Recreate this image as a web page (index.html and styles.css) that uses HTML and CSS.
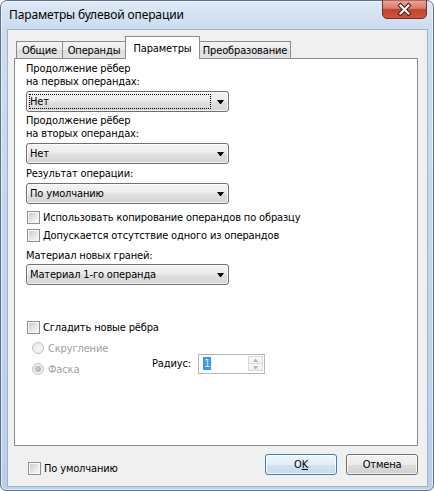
FILE: index.html
```html
<!DOCTYPE html>
<html lang="ru">
<head>
<meta charset="utf-8">
<title>Параметры булевой операции</title>
<link rel="stylesheet" href="styles.css">
</head>
<body>
<div class="window">
  <div class="titlebar">
    <span class="title">Параметры булевой операции</span>
    <div class="close">
      <svg width="45" height="19" viewBox="0 0 45 19">
        <defs>
          <linearGradient id="cg" x1="0" y1="0" x2="0" y2="1">
            <stop offset="0" stop-color="#EBA99B"/>
            <stop offset="0.45" stop-color="#D97C68"/>
            <stop offset="0.52" stop-color="#C4432C"/>
            <stop offset="1" stop-color="#D2553A"/>
          </linearGradient>
        </defs>
        <path d="M0.5 0 V14 a4.5 4.5 0 0 0 4.5 4.5 H40 a4.5 4.5 0 0 0 4.5 -4.5 V0 Z" fill="url(#cg)" stroke="#6B3328"/>
        <path d="M18.5 5.5 L26.5 13.5 M26.5 5.5 L18.5 13.5" stroke="#3E1C16" stroke-width="4.2" stroke-linecap="square"/>
        <path d="M18.5 5.5 L26.5 13.5 M26.5 5.5 L18.5 13.5" stroke="#FFFFFF" stroke-width="2.2" stroke-linecap="square"/>
      </svg>
    </div>
  </div>
  <div class="client">
    <div class="tabs">
      <div class="tab t1">Общие</div>
      <div class="tab t2">Операнды</div>
      <div class="tab active t3">Параметры</div>
      <div class="tab t4">Преобразование</div>
    </div>
    <div class="panel">
      <div class="label lab1">Продолжение рёбер<br>на первых операндах:</div>
      <div class="combo"><div class="cval focus">Нет</div><div class="carrow"><span class="tri"></span></div></div>

      <div class="label lab2">Продолжение рёбер<br>на вторых операндах:</div>
      <div class="combo"><div class="cval">Нет</div><div class="carrow"><span class="tri"></span></div></div>

      <div class="label lab3">Результат операции:</div>
      <div class="combo"><div class="cval">По умолчанию</div><div class="carrow"><span class="tri"></span></div></div>

      <div class="check-row cr1"><span class="cb"></span><span>Использовать копирование операндов по образцу</span></div>
      <div class="check-row cr2"><span class="cb"></span><span><u>Д</u>опускается отсутствие одного из операндов</span></div>

      <div class="label lab4">Материал новых граней:</div>
      <div class="combo"><div class="cval">Материал 1-го операнда</div><div class="carrow"><span class="tri"></span></div></div>

      <div class="check-row cr3"><span class="cb"></span><span>Сгладить новые рёбра</span></div>

      <div class="smooth">
        <div class="radios">
          <div class="radio-row"><span class="rb"></span><span>Скругление</span></div>
          <div class="radio-row r2"><span class="rb checked"></span><span>Фаска</span></div>
        </div>
        <div class="radius">
          <span class="rlabel">Радиус:</span>
          <div class="spin">
            <span class="spinval"><span class="sel">1</span></span>
            <span class="spinbtns">
              <span class="sb"><span class="up"></span></span>
              <span class="sb"><span class="down"></span></span>
            </span>
          </div>
        </div>
      </div>
    </div>
    <div class="footer">
      <div class="check-row foot-check"><span class="cb"></span><span>По умолчанию</span></div>
      <div class="buttons">
        <div class="btn default">O<u>K</u></div>
        <div class="btn">Отмена</div>
      </div>
    </div>
  </div>
</div>
</body>
</html>
```
FILE: styles.css
```css
* { box-sizing: border-box; }
html, body { margin: 0; padding: 0; }
body {
  width: 434px;
  height: 491px;
  overflow: hidden;
  background: #ffffff;
  font-family: "DejaVu Sans Condensed", "DejaVu Sans", sans-serif;
  font-stretch: condensed;
  font-size: 11px;
  letter-spacing: -0.15px;
  color: #000;
}
.window {
  width: 434px;
  height: 491px;
  border: 1px solid #5E7189;
  border-radius: 7px 7px 6px 6px;
  background: linear-gradient(#DCE8F5 0px, #CCDDF0 28px, #C1D6EC 60%, #BAD0E9 100%);
  padding: 0 5px 3px 6px;
  display: flex;
  flex-direction: column;
  box-shadow: inset 0 0 0 1px rgba(255,255,255,0.55);
}
.titlebar {
  height: 28px;
  display: flex;
  justify-content: space-between;
  align-items: flex-start;
}
.title {
  font-family: "Noto Sans", sans-serif;
  font-stretch: normal;
  font-size: 12px;
  letter-spacing: -0.12px;
  line-height: 16px;
  margin-top: 6px;
  margin-left: 2px;
}
.close {
  width: 45px;
  height: 19px;
  margin-right: 1px;
  margin-top: -1px;
}
.close svg { display: block; }
.client {
  flex: 1;
  border: 1px solid #9FB2C8;
  background: #F0F0F0;
  padding: 6px 9px 0 6px;
  display: flex;
  flex-direction: column;
}
.tabs {
  height: 22px;
  display: flex;
  align-items: flex-end;
  padding-left: 2px;
}
.tab {
  height: 17px;
  border: 1px solid #898C95;
  border-bottom: none;
  background: linear-gradient(#F3F3F3, #EBEBEB 50%, #DDDDDD 50%, #E3E3E3);
  display: flex;
  align-items: center;
  justify-content: center;
  line-height: 13px;
  margin-left: -1px;
}
.t1 { width: 47px; margin-left: 0; }
.t2 { width: 64px; }
.t3 { width: 75px; }
.t4 { width: 92px; }
.tab.active {
  height: 23px;
  margin-bottom: -1px;
  background: #fff;
  position: relative;
  z-index: 1;
}
.panel {
  height: 388px;
  border: 1px solid #898C95;
  background: #fff;
  padding: 3px 0 0 11px;
}
.label { line-height: 13px; white-space: nowrap; }
.lab2 { margin-top: 2px; }
.lab3 { margin-top: 3px; }
.lab4 { margin-top: 7px; }
.combo {
  width: 203px;
  height: 21px;
  margin-top: 3px;
  border: 1px solid #707070;
  border-radius: 3px;
  background: linear-gradient(#F4F4F4, #ECECEC 48%, #E0E0E0 52%, #D5D5D5);
  box-shadow: inset 0 0 0 1px rgba(255,255,255,0.7);
  display: flex;
}
.lab4 + .combo { margin-top: 2px; }
.cval {
  width: 182px;
  margin: 2px 0 2px 2px;
  border: 1px dotted transparent;
  line-height: 13px;
  display: flex;
  align-items: center;
  white-space: nowrap;
}
.cval.focus { border-color: #000; }
.carrow {
  flex: 1;
  display: flex;
  align-items: center;
  justify-content: flex-end;
  padding-right: 4px;
}
.tri {
  width: 1px;
  height: 0;
  border-top: 4px solid #000;
  border-left: 3px solid transparent;
  border-right: 3px solid transparent;
  box-sizing: content-box;
}
.check-row {
  display: flex;
  align-items: center;
  height: 13px;
  gap: 3px;
  line-height: 13px;
  white-space: nowrap;
}
.cb {
  width: 13px;
  height: 13px;
  margin-left: 1px;
  flex: none;
  border: 1px solid #8E8F8F;
  background: linear-gradient(135deg, #C5C9CE, #EDEEEF 70%, #F6F6F6);
  box-shadow: inset 0 0 0 1px #F7F7F7;
}
.cr1 { margin-top: 7px; }
.cr2 { margin-top: 5px; }
.cr3 { margin-top: 36px; }
.smooth {
  display: flex;
  margin-top: 8px;
}
.radios {
  width: 126px;
  color: #A0A0A0;
}
.radio-row {
  display: flex;
  align-items: center;
  height: 12px;
  gap: 4px;
  line-height: 13px;
  padding-left: 6px;
}
.radio-row.r2 { margin-top: 9px; }
.rb {
  width: 12px;
  height: 12px;
  flex: none;
  border-radius: 50%;
  border: 1px solid #C4C4C4;
  background: radial-gradient(circle at 60% 60%, #F7F7F7, #E6E6E6);
  display: flex;
  align-items: center;
  justify-content: center;
}
.rb.checked::after {
  content: "";
  width: 6px;
  height: 6px;
  border-radius: 50%;
  background: radial-gradient(circle at 40% 40%, #CFCFCF, #9C9C9C);
}
.radius {
  display: flex;
  align-items: center;
  margin-top: 10px;
  gap: 7px;
}
.rlabel { line-height: 13px; }
.spin {
  width: 67px;
  height: 20px;
  border: 1px solid #B5B7BD;
  background: #fff;
  display: flex;
  align-items: center;
  padding: 0 1px 0 4px;
}
.spinval { flex: 1; display: flex; }
.sel {
  background: #3399FF;
  color: #E6F0FA;
  line-height: 13px;
  padding: 0 1px;
}
.spinbtns {
  width: 15px;
  display: flex;
  flex-direction: column;
}
.sb {
  height: 8px;
  border: 1px solid #D6D8DC;
  background: linear-gradient(#FAFAFA, #EFEFEF);
  display: flex;
  align-items: center;
  justify-content: center;
}
.sb + .sb { margin-top: -1px; }
.up {
  width: 1px;
  height: 0;
  box-sizing: content-box;
  border-bottom: 3px solid #B4B4B4;
  border-left: 2px solid transparent;
  border-right: 2px solid transparent;
}
.down {
  width: 1px;
  height: 0;
  box-sizing: content-box;
  border-top: 3px solid #B4B4B4;
  border-left: 2px solid transparent;
  border-right: 2px solid transparent;
}
.footer {
  display: flex;
  align-items: flex-start;
  margin-top: 8px;
}
.foot-check {
  margin-top: 8px;
  margin-left: 13px;
}
.buttons {
  margin-left: auto;
  display: flex;
  gap: 9px;
}
.btn {
  width: 72px;
  height: 21px;
  border: 1px solid #707070;
  border-radius: 3px;
  background: linear-gradient(#F2F2F2, #EBEBEB 50%, #DDDDDD 50%, #CFCFCF);
  box-shadow: inset 0 0 0 1px rgba(255,255,255,0.75);
  display: flex;
  align-items: center;
  justify-content: center;
  line-height: 13px;
}
.btn.default {
  border-color: #3C7FB1;
  background: linear-gradient(#EEF5FB, #E3EEF8 50%, #D2E3F2 50%, #C6DAEC);
}
```
